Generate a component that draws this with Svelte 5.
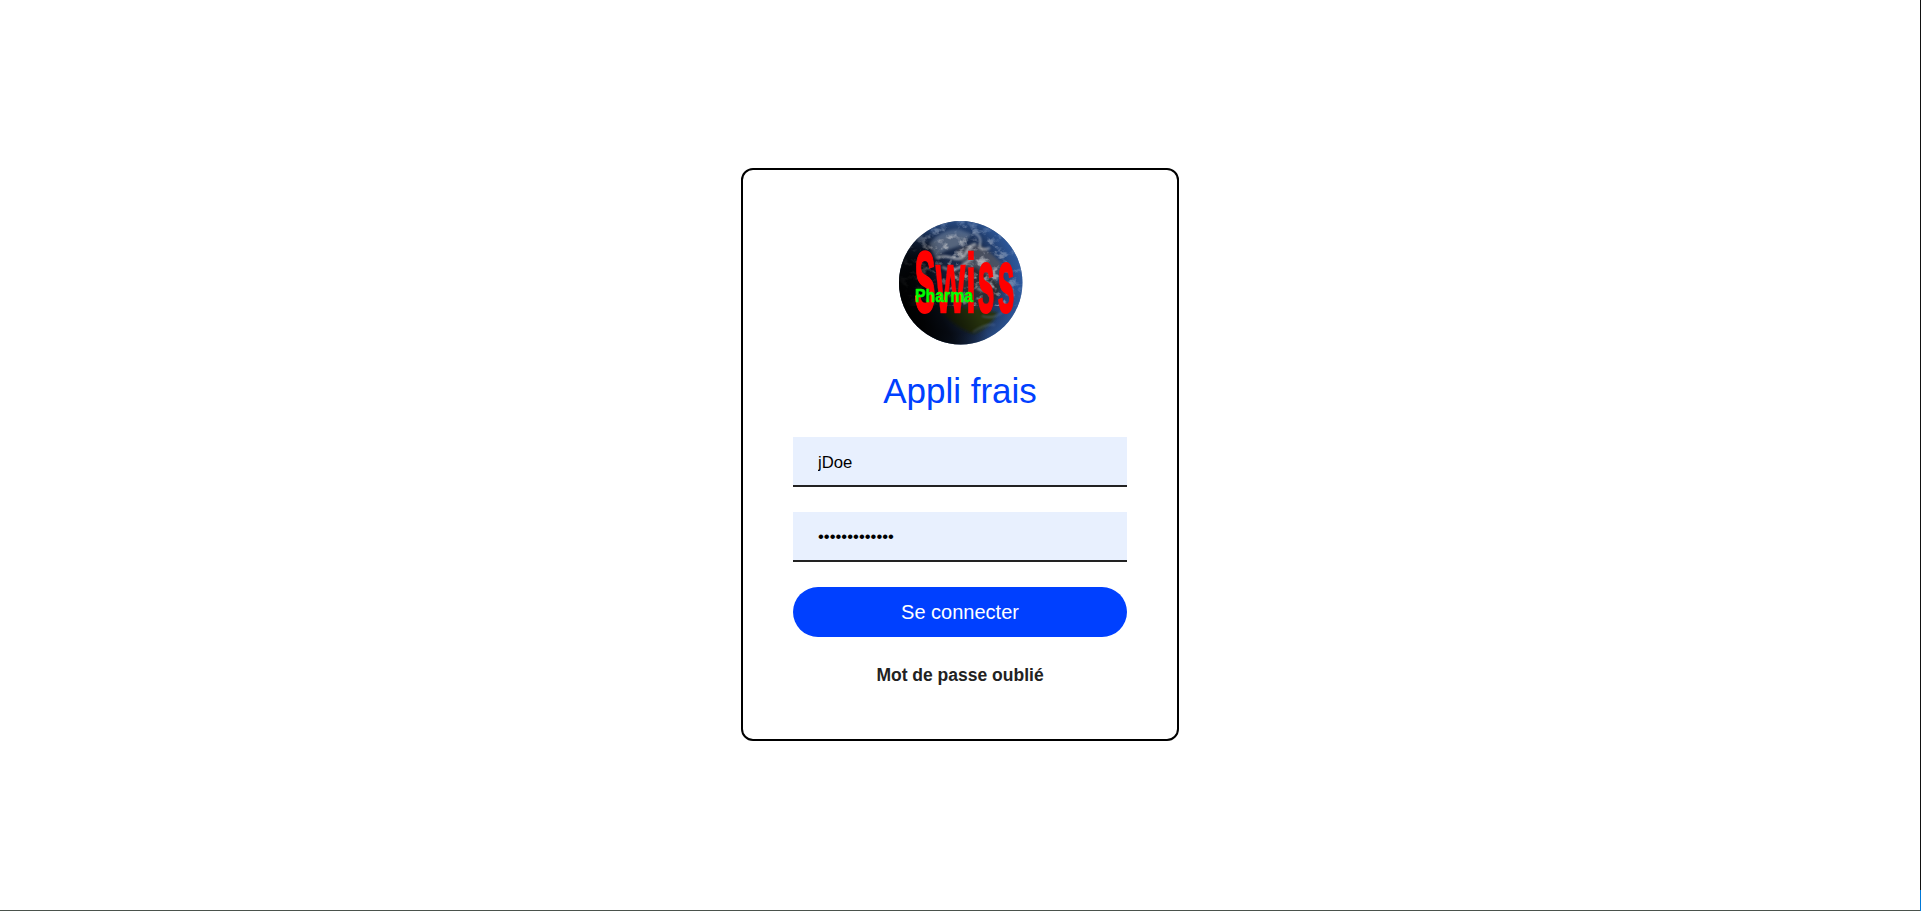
<script>
  let login = $state('jDoe');
  let password = $state('abcdefghijklm');
</script>

<main>
  <form class="card" onsubmit={(e) => e.preventDefault()}>
    <svg class="logo" viewBox="0 0 125 125" role="img" aria-label="Swiss Pharma">
      <defs>
        <linearGradient id="ocean" x1="0" y1="0" x2="1" y2="0">
          <stop offset="0" stop-color="#03060d" />
          <stop offset="0.3" stop-color="#15233f" />
          <stop offset="0.65" stop-color="#1c2f52" />
          <stop offset="1" stop-color="#2a4f8b" />
        </linearGradient>
        <radialGradient id="rim" cx="0.46" cy="0.53" r="0.56">
          <stop offset="0.68" stop-color="#2c5698" stop-opacity="0" />
          <stop offset="1" stop-color="#2f5ea6" stop-opacity="0.8" />
        </radialGradient>
        <linearGradient id="night" x1="0" y1="0.7" x2="0.55" y2="0.4">
          <stop offset="0.1" stop-color="#000" />
          <stop offset="0.42" stop-color="#000" stop-opacity="0.75" />
          <stop offset="0.85" stop-color="#000" stop-opacity="0" />
        </linearGradient>
        <filter id="clouds" x="0" y="0" width="100%" height="100%">
          <feTurbulence type="fractalNoise" baseFrequency="0.1 0.13" numOctaves="5" seed="21" />
          <feColorMatrix values="0 0 0 0 0.6  0 0 0 0 0.61  0 0 0 0 0.64  4.2 2 0 0 -3.15" />
        </filter>
        <filter id="soft" x="-20%" y="-20%" width="140%" height="140%"><feGaussianBlur stdDeviation="1.8" /></filter>
        <filter id="wisp" x="-20%" y="-20%" width="140%" height="140%"><feGaussianBlur stdDeviation="0.8" /></filter>
        <clipPath id="disc"><circle cx="62.7" cy="62.7" r="61.7" /></clipPath>
      </defs>
      <g clip-path="url(#disc)">
        <rect width="125" height="125" fill="url(#ocean)" />
        <g filter="url(#soft)">
          <path d="M31 24Q43 9 61 9L74 14 62 26 47 31 37 38Z" fill="#6b7a90" opacity=".75" />
          <path d="M58 31Q77 18 91 32L104 43 98 64 78 57 65 45Z" fill="#5c5c62" opacity=".7" />
          <path d="M53 51 78 47 104 66 96 84 72 90 53 77Z" fill="#2c2d36" />
          <path d="M40 88Q69 84 100 93 92 108 76 114 56 108 40 88Z" fill="#26320f" />
        </g>
        <rect width="125" height="86" filter="url(#clouds)" opacity=".6" />
        <g fill="none" stroke="#c6c8cb" filter="url(#wisp)" opacity=".75">
          <path d="M38 38Q46 35 55 38T68 33 78 24" stroke-width="2.6" />
          <path d="M44 47Q54 53 64 46T75 37" stroke-width="2.2" />
          <path d="M76 13Q84 16 82 24T92 28M79 43Q86 39 91 48" stroke-width="2" />
          <path d="M79 68Q86 73 92 69M83 58 95 66" stroke-width="2" />
        </g>
        <g fill="none" stroke="#6b83a8" filter="url(#wisp)" opacity=".45">
          <path d="M75 112Q88 103 97 105M84 96Q96 100 106 91" stroke-width="1.8" />
        </g>
        <path d="M111 68 117 71 114 77 109 74Z" fill="#6a6c72" filter="url(#wisp)" />
        <rect width="125" height="125" fill="url(#rim)" />
        <rect width="125" height="125" fill="url(#night)" />
      </g>
      <g font-family="'Liberation Sans', Arial, sans-serif" font-weight="bold">
        <text class="swiss" transform="translate(16.5 92) scale(.5 1)" font-size="87" textLength="42" lengthAdjust="spacingAndGlyphs">S</text>
        <text class="swiss thin" transform="translate(37.5 92.5) scale(.5 1)" font-size="90" textLength="60" lengthAdjust="spacingAndGlyphs">w</text>
        <text class="swiss thin" transform="translate(67.5 92.5) scale(.5 1)" font-size="86" textLength="22" lengthAdjust="spacingAndGlyphs">i</text>
        <text class="swiss" transform="translate(79.5 92.3) scale(.5 1)" font-size="90" textLength="34" lengthAdjust="spacingAndGlyphs">s</text>
        <text class="swiss" transform="translate(99.5 92.3) scale(.5 1)" font-size="90" textLength="34" lengthAdjust="spacingAndGlyphs">s</text>
        <text class="pharma" x="17" y="82" font-size="18.5" textLength="58" lengthAdjust="spacingAndGlyphs">Pharma</text>
      </g>
    </svg>
    <h1>Appli frais</h1>
    <input type="text" aria-label="Login" bind:value={login} />
    <input type="password" aria-label="Mot de passe" bind:value={password} />
    <button type="submit">Se connecter</button>
    <a href="#oubli">Mot de passe oublié</a>
  </form>
</main>

<style>
  :global(body) {
    background: #fff;
    overflow: hidden;
  }

  main {
    box-sizing: border-box;
    height: 911px;
    padding-bottom: 1px;
    display: flex;
    align-items: center;
    justify-content: center;
    border-right: 1px solid;
    border-image: linear-gradient(#111 889px, #0078d7 889px) 1;
    border-bottom: 0;
    box-shadow: inset 0 -1px #4a524c;
    font-family: 'Liberation Sans', Arial, sans-serif;
  }

  .card {
    box-sizing: border-box;
    width: 438px;
    height: 573px;
    margin-bottom: 1px;
    padding: 50px;
    border: 2px solid #000;
    border-radius: 12px;
    display: flex;
    flex-direction: column;
    align-items: center;
  }

  .logo {
    width: 125px;
    height: 125px;
    flex: none;
  }

  .swiss {
    fill: #f00;
    stroke: #f00;
    stroke-width: 1.8;
  }

  .thin {
    stroke-width: 0.6;
  }

  .pharma {
    fill: #0f0;
    stroke: #0f0;
    stroke-width: 0.5;
  }

  h1 {
    margin: 25px 0;
    height: 42px;
    line-height: 42px;
    font-size: 35px;
    font-weight: 400;
    color: #0040ff;
  }

  input {
    box-sizing: border-box;
    width: 100%;
    height: 50px;
    margin: 0 0 25px;
    padding: 3px 25px 0;
    border: 0;
    border-bottom: 2px solid #222;
    border-radius: 0;
    background: #e8f0fe;
    color: #000;
    font: 16.7px 'Liberation Sans', Arial, sans-serif;
    outline: none;
  }

  input[type='password'] {
    padding-top: 2px;
  }

  button {
    width: 100%;
    height: 50px;
    flex: none;
    padding: 1px 0 0;
    border: 0;
    border-radius: 25px;
    background: #0040ff;
    color: #fff;
    font: 20px 'Liberation Sans', Arial, sans-serif;
  }

  a {
    margin-top: 28px;
    line-height: 20px;
    font-size: 17.5px;
    font-weight: 700;
    color: #222;
    text-decoration: none;
  }
</style>
